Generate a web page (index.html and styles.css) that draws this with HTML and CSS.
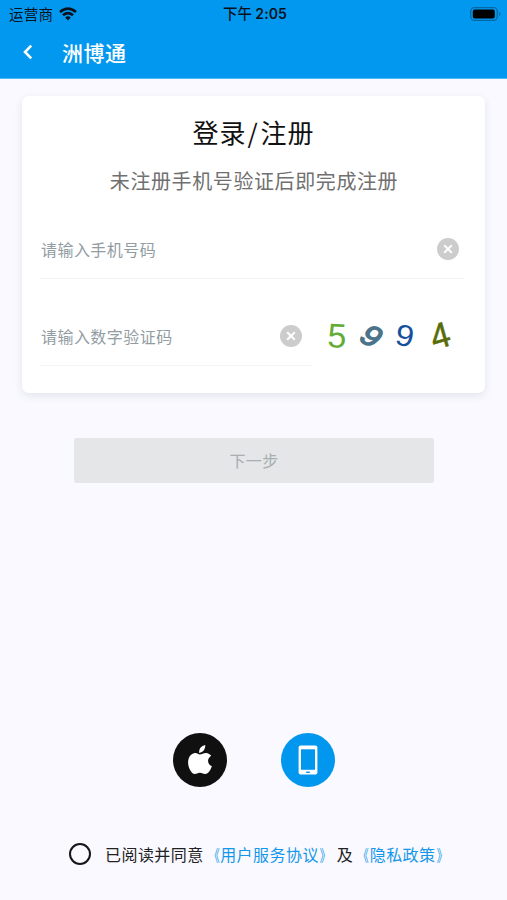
FILE: index.html
```html
<!DOCTYPE html>
<html lang="zh-CN">
<head>
<meta charset="utf-8">
<meta name="viewport" content="width=device-width, initial-scale=1">
<title>洲博通</title>
<link rel="stylesheet" href="styles.css">
</head>
<body>
<header class="header">
  <div class="status">
    <div class="carrier"><span>运营商</span>
      <svg width="18" height="14" viewBox="0 0 18 14" fill="none" stroke="#06131d" stroke-width="2.6"><path d="M1 5.1Q9-1.7 17 5.1M4 8.3Q9 4.1 14 8.3"/><path d="M6.2 10.5Q9 8.1 11.8 10.5L9 13.5Z" fill="#06131d" stroke="none"/></svg>
    </div>
    <div class="time">下午 <b>2:05</b></div>
    <div class="battery-wrap">
      <svg width="31" height="14" viewBox="0 0 31 14"><rect x=".7" y=".7" width="26.6" height="12.6" rx="3.8" fill="none" stroke="#0567a3" stroke-width="1.3"/><rect x="2.8" y="2.5" width="22" height="9" rx="2" fill="#000"/><path d="M29 5q1.5.6 1.5 2T29 9z" fill="#0567a3"/></svg>
    </div>
  </div>
  <nav class="nav">
    <svg class="back" width="12" height="16" viewBox="0 0 12 16"><path d="M9.2 1.7 3 8l6.2 6.3" fill="none" stroke="#fff" stroke-width="2.6"/></svg>
    <h1>洲博通</h1>
  </nav>
</header>
<main>
  <section class="card">
    <h2>登录<span class="slash">/</span>注册</h2>
    <p class="subtitle">未注册手机号验证后即完成注册</p>
    <div class="field phone"><span>请输入手机号码</span>
      <svg class="clear" viewBox="0 0 22 22"><circle cx="11" cy="11" r="11" fill="#ccc"/><path d="m7.2 7.2 7.6 7.6m0-7.6-7.6 7.6" stroke="#fff" stroke-width="2"/></svg>
    </div>
    <div class="code-row">
      <div class="field code"><span>请输入数字验证码</span>
        <svg class="clear" viewBox="0 0 22 22"><circle cx="11" cy="11" r="11" fill="#ccc"/><path d="m7.2 7.2 7.6 7.6m0-7.6-7.6 7.6" stroke="#fff" stroke-width="2"/></svg>
      </div>
      <svg class="captcha" width="140" height="44" viewBox="0 0 140 44">
        <text transform="translate(25 21.5) rotate(3)" y="12" font-size="34" fill="#62ac36">5</text>
        <text transform="translate(60 22) scale(1.22 1) rotate(38)" y="10" font-size="28" fill="#4b7389" stroke="#4b7389" stroke-width="1.3">9</text>
        <text transform="translate(93 21.5) rotate(10) scale(1.1 1)" y="10.6" font-size="30" fill="#15509c">9</text>
        <text transform="translate(128 21.5) rotate(-16) scale(1.05 1.08)" y="11.5" font-size="33" fill="#586c08" stroke="#586c08" stroke-width=".4">4</text>
      </svg>
    </div>
  </section>
  <button class="next" disabled>下一步</button>
  <div class="logins">
    <a class="login apple"><svg width="26" height="32" viewBox="0 0 26 32" fill="#fff"><path d="M12.2 8.9Q11.4 3 18.2 1 18.8 7.3 12.2 8.9ZM12.6 10.4C15 10.4 16.4 8.8 19 8.9 21.4 9 23.1 10.2 24.1 11.8 19.6 14.8 20.3 20.4 24.9 22.2 23.6 25.8 21.3 29.8 18.4 30 16.1 30.1 15.4 28.7 12.9 28.7S9.5 30.1 7.6 30C4.6 29.8 1.2 23.7 1.1 18.9 1 12.4 4.8 9.1 8.2 9 10.1 8.9 11.8 10.4 12.6 10.4Z"/></svg></a>
    <a class="login mobile"><svg width="20" height="30" viewBox="0 0 20 30"><rect x=".6" y=".5" width="18.8" height="29" rx="2" fill="#fff"/><rect x="3" y="4.3" width="14" height="20.5" fill="#0297ef"/><rect x="8" y="26.5" width="4" height="1.4" rx=".7" fill="#0297ef"/></svg></a>
  </div>
  <div class="agreement"><i class="radio"></i><span>已阅读并同意</span><a><span class="open">《</span>用户服务协议<span class="close">》</span></a><span class="and">及</span><a><span class="open">《</span>隐私政策<span class="close">》</span></a></div>
</main>
</body>
</html>
```
FILE: styles.css
```css
* { box-sizing: border-box; }
body { margin: 0; height: 900px; background: #f9f9ff; font-family: "Noto Sans CJK SC", sans-serif; overflow: hidden; }
svg { display: block; flex: none; }
.header { height: 79px; background: #0298f0; border-bottom: 1px solid #4dbaf5; }
.status { display: grid; grid-template-columns: 1fr auto 1fr; align-items: center; height: 26px; padding: 0 6px 0 9px; color: #06131d; }
.carrier { display: flex; align-items: center; gap: 6px; font-size: 14.5px; line-height: 26px; letter-spacing: .3px; }
.time { font-size: 14.5px; font-weight: 500; line-height: 26px; white-space: nowrap; }
.time b { font-family: Inter, sans-serif; font-weight: 600; font-size: 14px; letter-spacing: .1px; }
.battery-wrap { display: flex; justify-content: flex-end; }
.nav { display: flex; align-items: center; height: 51px; padding-left: 22px; }
.nav h1 { margin: 0 0 0 28px; color: #fff; font-size: 21px; font-weight: 500; line-height: 30px; letter-spacing: .5px; }
.card { width: 463px; height: 297px; margin: 17px auto 0; padding: 17px 20px 0 18px; background: #fff; border-radius: 7px; box-shadow: 0 3px 9px rgba(50, 50, 80, .1); }
h2 { margin: 0; text-align: center; font-size: 26px; font-weight: 400; line-height: 38px; letter-spacing: 1px; color: #111; text-indent: 2px; }
.slash { margin: 0 2px 0 1px; }
.subtitle { margin: 15px 0 0; text-align: center; font-size: 20px; line-height: 30px; letter-spacing: .6px; text-indent: 3px; color: #707070; white-space: nowrap; }
.field { display: flex; align-items: center; justify-content: space-between; height: 60px; border-bottom: 1px solid #f4f4f6; color: #929ca3; font-size: 16px; letter-spacing: .45px; }
.field span { padding-left: 1px; white-space: nowrap; }
.clear { width: 22px; height: 22px; }
.phone { margin-top: 23px; padding-right: 6px; }
.code-row { display: flex; align-items: center; margin-top: 27px; }
.code { width: 272px; padding-right: 10px; }
.captcha { font-family: "Liberation Sans", sans-serif; text-anchor: middle; overflow: visible; }
.next { display: block; width: 360px; height: 45px; margin: 44.5px auto 0; padding: 0; border: 0; border-radius: 3px; background: #e4e6e7; color: #a7afb1; font: 400 16px/24px "Noto Sans CJK SC", sans-serif; letter-spacing: .4px; text-indent: 1px; }
.logins { display: flex; justify-content: center; gap: 54px; margin-top: 250.5px; }
.login { display: flex; align-items: center; justify-content: center; width: 54px; height: 54px; border-radius: 50%; }
.apple { background: #101010; }
.mobile { background: #0297ef; }
.agreement { display: flex; align-items: center; height: 26px; margin: 54px 0 0 68.5px; font-size: 16px; letter-spacing: .45px; color: #222; white-space: nowrap; }
.agreement a { color: #1597e9; }
.open, .close { display: inline-block; transform: scaleX(.67); }
.open { transform-origin: 92% 50%; }
.close { transform-origin: 15% 50%; }
.radio { width: 22px; height: 22px; margin-right: 14.5px; border: 2px solid #161616; border-radius: 50%; }
.and { margin-left: 1.5px; }
```
